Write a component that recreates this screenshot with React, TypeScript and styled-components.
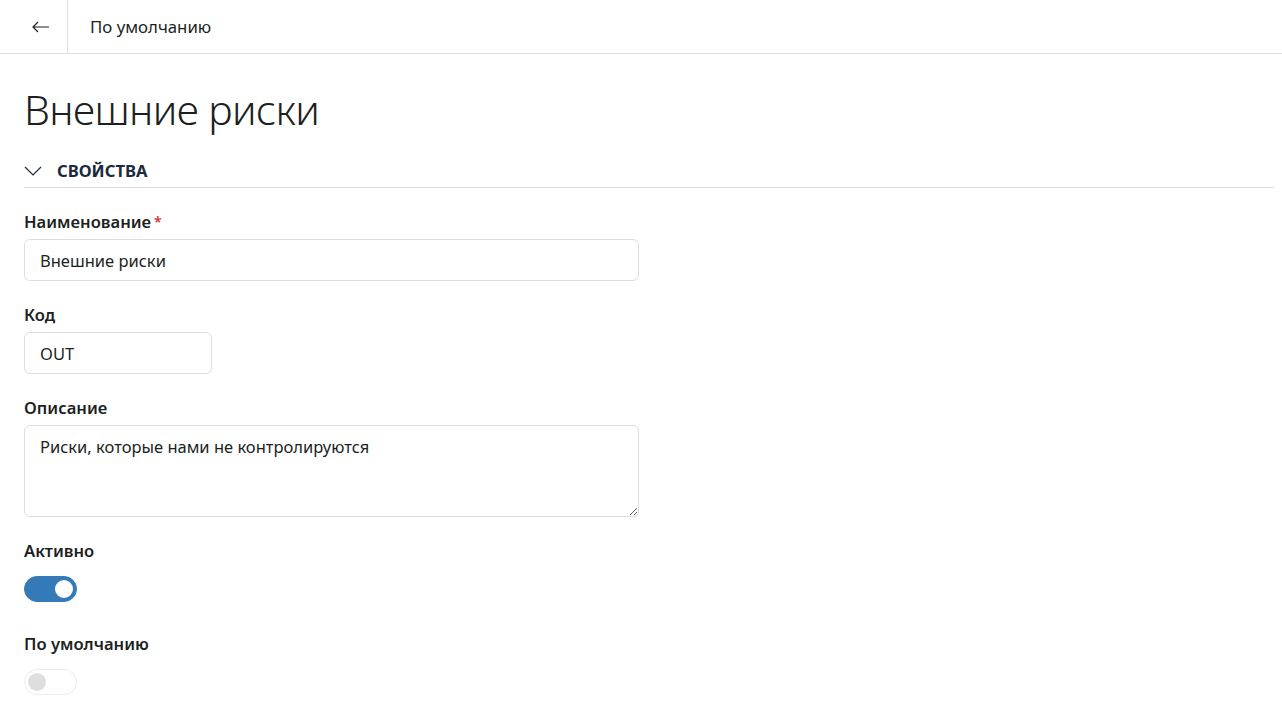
import React from "react";
import styled, { createGlobalStyle } from "styled-components";

const Global = createGlobalStyle`
  html, body { margin: 0; padding: 0; background: #fff; }
  body { font-family: "Noto Sans", "Open Sans", sans-serif; color: #201f1e; }
  * { box-sizing: border-box; }
`;

const Page = styled.div`
  display: flex;
  flex-direction: column;
  min-height: 716px;
`;

const TopBar = styled.header`
  display: flex;
  align-items: stretch;
  height: 54px;
  border-bottom: 1px solid #e1e1e1;
`;

const BackButton = styled.button`
  width: 68px;
  border: none;
  border-right: 1px solid #e1e1e1;
  background: transparent;
  display: flex;
  align-items: center;
  justify-content: center;
  padding: 0 0 0 14px;
  cursor: pointer;
  color: #201f1e;
`;

const TopTitle = styled.div`
  display: flex;
  align-items: center;
  padding-left: 22px;
  font-size: 16.8px;
  color: #201f1e;
`;

const Content = styled.main`
  padding: 25px 8px 0 24px;
  display: flex;
  flex-direction: column;
`;

const Title = styled.h1`
  margin: 0;
  font-size: 41px;
  font-weight: 300;
  line-height: 60px;
  color: #201f1e;
  letter-spacing: -0.6px;
`;

const SectionHeader = styled.div`
  display: flex;
  align-items: center;
  gap: 15px;
  margin-top: 17px;
  height: 32px;
  border-bottom: 1px solid #dedede;
  padding-bottom: 2px;
`;

const SectionTitle = styled.span`
  font-size: 16.6px;
  font-weight: 700;
  color: #1b2a3c;
  text-transform: uppercase;
`;

const Form = styled.div`
  display: flex;
  flex-direction: column;
  gap: 21px;
  padding-top: 21px;
`;

const Field = styled.div`
  display: flex;
  flex-direction: column;
  gap: 6px;
`;

const Label = styled.label`
  font-size: 16.6px;
  font-weight: 600;
  line-height: 24px;
  padding-top: 1px;
  margin-bottom: -1px;
  color: #201f1e;
`;

const Required = styled.span`
  color: #d13438;
  margin-left: 3px;
  font-size: 14px;
  vertical-align: top;
`;

const Input = styled.input<{ $w: number }>`
  width: ${(p) => p.$w}px;
  height: 42px;
  border: 1px solid #dcdde0;
  border-radius: 6px;
  padding: 0 15px;
  font-family: inherit;
  font-size: 16.5px;
  color: #201f1e;
  outline: none;
`;

const TextArea = styled.textarea`
  width: 615px;
  height: 92px;
  border: 1px solid #dcdde0;
  border-radius: 6px;
  padding: 10px 15px;
  font-family: inherit;
  font-size: 16.5px;
  line-height: 22px;
  color: #201f1e;
  outline: none;
  resize: both;
`;

const SwitchRow = styled.div`
  height: 42px;
  display: flex;
  align-items: center;
`;

const Switch = styled.div<{ $on: boolean }>`
  width: 53px;
  height: 26px;
  border-radius: 13px;
  padding: 0 3px;
  display: flex;
  align-items: center;
  justify-content: ${(p) => (p.$on ? "flex-end" : "flex-start")};
  background: ${(p) => (p.$on ? "#357ab8" : "#fff")};
  border: 1px solid ${(p) => (p.$on ? "#357ab8" : "#ececec")};
`;

const Knob = styled.span<{ $on: boolean }>`
  width: 18px;
  height: 18px;
  border-radius: 50%;
  background: ${(p) => (p.$on ? "#fff" : "#dedede")};
`;

const ArrowLeft = () => (
  <svg width="18" height="12" viewBox="0 0 18 12" fill="none">
    <path d="M6 1L1 6L6 11M1 6H17" stroke="#201f1e" strokeWidth="1.2" />
  </svg>
);

const Chevron = () => (
  <svg width="18" height="10" viewBox="0 0 18 10" fill="none">
    <path d="M1 1L9 9L17 1" stroke="#1b2a3c" strokeWidth="1.2" />
  </svg>
);

export default function App() {
  return (
    <Page>
      <Global />
      <TopBar>
        <BackButton aria-label="Назад">
          <ArrowLeft />
        </BackButton>
        <TopTitle>По умолчанию</TopTitle>
      </TopBar>
      <Content>
        <Title>Внешние риски</Title>
        <SectionHeader>
          <Chevron />
          <SectionTitle>Свойства</SectionTitle>
        </SectionHeader>
        <Form>
          <Field>
            <Label>
              Наименование<Required>*</Required>
            </Label>
            <Input $w={615} defaultValue="Внешние риски" />
          </Field>
          <Field>
            <Label>Код</Label>
            <Input $w={188} defaultValue="OUT" />
          </Field>
          <Field>
            <Label>Описание</Label>
            <TextArea defaultValue="Риски, которые нами не контролируются" />
          </Field>
          <Field>
            <Label>Активно</Label>
            <SwitchRow>
              <Switch $on={true}>
                <Knob $on={true} />
              </Switch>
            </SwitchRow>
          </Field>
          <Field>
            <Label>По умолчанию</Label>
            <SwitchRow>
              <Switch $on={false}>
                <Knob $on={false} />
              </Switch>
            </SwitchRow>
          </Field>
        </Form>
      </Content>
    </Page>
  );
}
